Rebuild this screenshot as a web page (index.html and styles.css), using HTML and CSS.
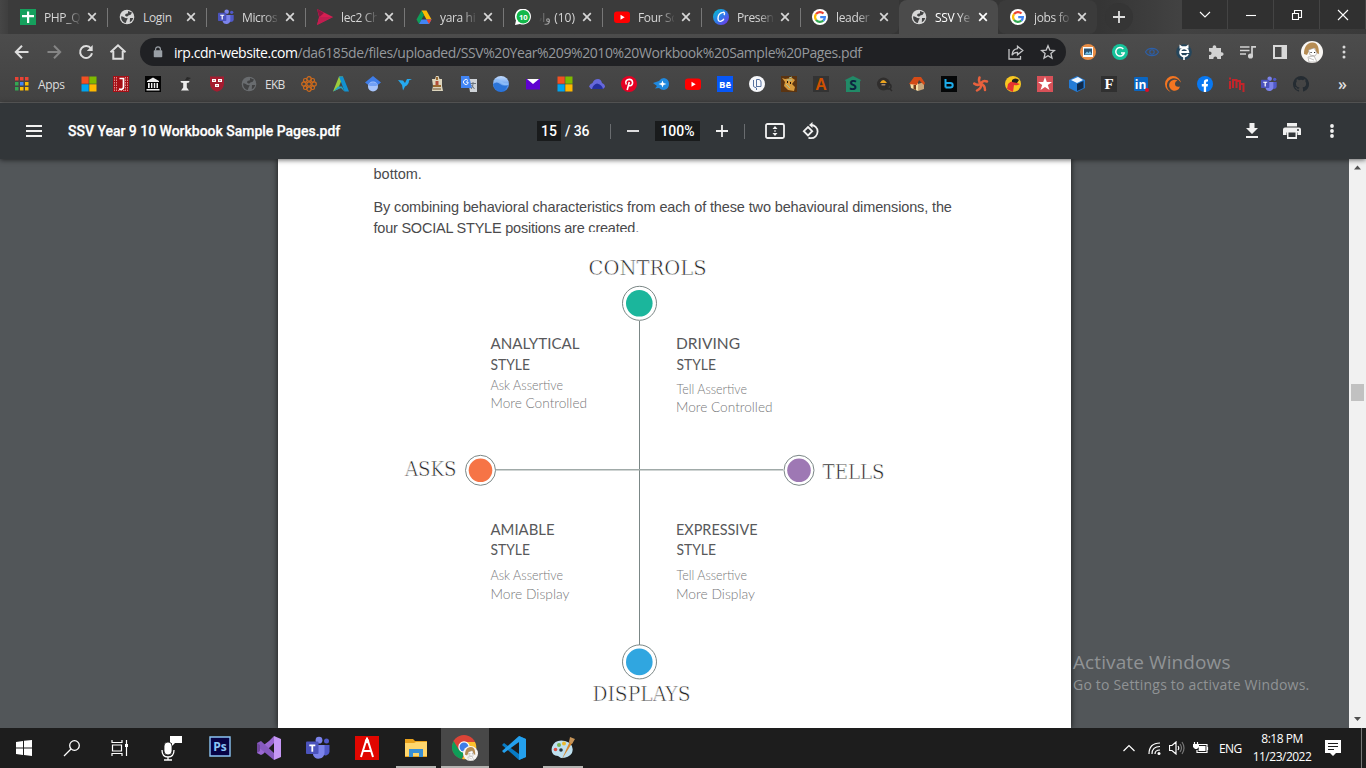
FILE: index.html
```html
<!DOCTYPE html>
<html lang="en">
<head>
<meta charset="utf-8">
<title>SSV Year 9 10 Workbook Sample Pages.pdf</title>
<link rel="stylesheet" href="styles.css">
</head>
<body>
<svg class="defs" width="0" height="0">
  <defs>
    <linearGradient id="canva" x1="0" y1="0" x2="1" y2="1"><stop offset="0" stop-color="#00c4cc"/><stop offset=".5" stop-color="#2f7bea"/><stop offset="1" stop-color="#7d2ae8"/></linearGradient>
    <linearGradient id="earth" x1="0" y1="0" x2="0" y2="1"><stop offset="0" stop-color="#c3dcff"/><stop offset="1" stop-color="#1f6fe0"/></linearGradient>
  </defs>
  <symbol id="globe" viewBox="0 0 16 16"><circle cx="8" cy="8" r="7.3" fill="currentColor"/><path d="M2.2 7.2c2 .3 3.300 1 4 1.800l2.600.3-1.200 2.200-.8 2.500c-3-.5-5-3.500-4.600-6.800zM9 2l4 1.400-1.300 2.400-2.300.6-1.400 1.300L6 6.500l.5-1.400L9 4.300zM11 9h3.200c-.4 1.900-1.600 3.500-3.400 4.300z" fill="#414243"/></symbol>
  <symbol id="google" viewBox="0 0 16 16"><circle cx="8" cy="8" r="8" fill="#fff"/><g fill="none" stroke-width="2.200"><path d="M4 5.200A4.900 4.900 0 0 1 11.500 4.600" stroke="#ea4335"/><path d="M4.100 11A4.900 4.900 0 0 1 4 5.200" stroke="#fbbc05"/><path d="M11.400 11.500A4.900 4.900 0 0 1 4 10.900" stroke="#34a853"/><path d="M8.200 8.100H12.900A4.900 4.900 0 0 1 11.300 11.600" stroke="#4285f4"/></g></symbol>
  <symbol id="youtube" viewBox="0 0 16 16"><rect x="0" y="2.500" width="16" height="11.500" rx="3" fill="#f00"/><path d="M6.500 5.700v5l4.200-2.500z" fill="#fff"/></symbol>
  <symbol id="teams" viewBox="0 0 24 24"><circle cx="13" cy="4.200" r="3.400" fill="#7b83eb"/><circle cx="20.500" cy="5" r="2.500" fill="#5059c9"/><path d="M16 9h7.500v7a4 4 0 0 1-7 2z" fill="#5059c9"/><path d="M8 9h10.500v8a6 6 0 0 1-11.500 2z" fill="#7b83eb"/><rect x="0" y="5.500" width="12.500" height="12.500" rx="1" fill="#4b53bc"/><path d="M3.300 8.500h6v1.800H7.200v5.400H5.400v-5.400H3.300z" fill="#fff"/></symbol>
  <symbol id="ms" viewBox="0 0 16 16"><path d="M.5.5h7.200v7.200H.5z" fill="#f25022"/><path d="M8.300.5h7.200v7.200H8.300z" fill="#7fba00"/><path d="M.5 8.300h7.200v7.200H.5z" fill="#00a4ef"/><path d="M8.300 8.300h7.200v7.200H8.300z" fill="#ffb900"/></symbol>
  <symbol id="close" viewBox="0 0 10 10"><path d="M1.200 1.200l7.600 7.600M8.800 1.200L1.200 8.800" stroke="currentColor" stroke-width="1.700"/></symbol>
  <symbol id="girl" viewBox="0 0 22 22"><circle cx="11" cy="11" r="11" fill="#f8f6f3"/><path d="M3 13C3 6 6 2 11 1.500S18 5 18 13l-2.500-1-1.500-5-6 3-2 4z" fill="#b68c53"/><path d="M7.500 9l5.500-2 3 5-2 3-5-1zM7 16l6-1 3 6H8zM8 17l5 2" fill="#fff" stroke="#9a9692" stroke-width=".6"/><path d="M9.500 11.500h1.200M13 11.500h1.200" stroke="#222"/></symbol>
</svg>

<header class="browser">
  <div class="tabstrip">
    <div class="tab"><svg class="fav" viewBox="0 0 16 16"><path d="M0 0h16v16H0z" fill="#16a05d"/><path d="M7 2.500h2.200V6H14v2.200H9.200V14H7V8.200H2V6h5z" fill="#fff"/></svg><span class="label">PHP_Q</span><svg class="x"><use href="#close"/></svg></div>
    <div class="tab"><svg class="fav light"><use href="#globe"/></svg><span class="label plain">Login</span><svg class="x"><use href="#close"/></svg></div>
    <div class="tab"><svg class="fav"><use href="#teams"/></svg><span class="label">Micros</span><svg class="x"><use href="#close"/></svg></div>
    <div class="tab"><svg class="fav" viewBox="0 0 16 16"><path d="M0 0l16 8L0 16l2-8z" fill="#d61f52"/><path d="M0 0l7 4-4.500 4z" fill="#8f1540"/><path d="M2.500 8L16 8 0 16z" fill="#c21d50"/></svg><span class="label">lec2 Ch</span><svg class="x"><use href="#close"/></svg></div>
    <div class="tab"><svg class="fav" viewBox="0 0 16 16"><path d="M5.500 1.500h5l5 9h-5z" fill="#fbbc04"/><path d="M5.500 1.500L8 6l-5 9-2.500-4.500z" fill="#0f9d58"/><path d="M5.500 10.500h10L13 15H3z" fill="#4285f4"/><path d="M15.500 10.500h-5L13 15z" fill="#ea4335"/></svg><span class="label">yara hi</span><svg class="x"><use href="#close"/></svg></div>
    <div class="tab"><svg class="fav" viewBox="0 0 16 16"><path d="M0 16l1-4.500A8 8 0 1 1 5 15z" fill="#fff"/><circle cx="8.200" cy="7.800" r="6.700" fill="#12b84a"/><text x="8.200" y="10.800" class="wa">10</text></svg><span class="label rtl" dir="rtl">(10) وات</span><svg class="x"><use href="#close"/></svg></div>
    <div class="tab"><svg class="fav"><use href="#youtube"/></svg><span class="label">Four Sc</span><svg class="x"><use href="#close"/></svg></div>
    <div class="tab"><svg class="fav" viewBox="0 0 16 16"><circle cx="8" cy="8" r="8" fill="url(#canva)"/><path d="M11 6c1-1.300.5-3-1.200-2.600C6.500 4 5 7 5 9.500s1.500 3.300 3.200 2.600c1.300-.5 2.300-1.500 2.600-2.400" fill="none" stroke="#fff" stroke-width="1.400"/></svg><span class="label">Presen</span><svg class="x"><use href="#close"/></svg></div>
    <div class="tab last"><svg class="fav"><use href="#google"/></svg><span class="label">leader</span><svg class="x"><use href="#close"/></svg></div>
    <div class="tab active"><svg class="fav light"><use href="#globe"/></svg><span class="label">SSV Ye</span><svg class="x"><use href="#close"/></svg></div>
    <div class="tab after"><svg class="fav"><use href="#google"/></svg><span class="label">jobs fo</span><svg class="x"><use href="#close"/></svg></div>
    <div class="newtab"><svg width="12" height="12" viewBox="0 0 12 12"><path d="M6 0v12M0 6h12" stroke="#dedede" stroke-width="1.800"/></svg></div>
    <div class="winctl">
      <span><svg width="12" height="8"><path d="M1 1l5 5 5-5" /></svg></span>
      <span><svg width="12" height="8"><path d="M1 4.500h10"/></svg></span>
      <span><svg width="12" height="12"><path d="M1.500 4.500h6v6h-6zM3.500 4V1.500h7v7H8"/></svg></span>
      <span><svg width="12" height="12"><path d="M1 1l10 10M11 1L1 11"/></svg></span>
    </div>
  </div>

  <div class="navbar">
    <div class="navbtns">
      <span><svg width="16" height="16" viewBox="0 0 16 16"><path d="M14.500 8H2M8 1.800L1.800 8 8 14.200"/></svg></span>
      <span class="dim"><svg width="16" height="16" viewBox="0 0 16 16"><path d="M1.500 8H14M8 1.800L14.200 8 8 14.200"/></svg></span>
      <span><svg width="16" height="16" viewBox="0 0 16 16"><path d="M13 4.500A6 6 0 1 0 14 9.300"/><path d="M14.700 1v6H8.800z" fill="#dedede" stroke="none"/></svg></span>
      <span><svg width="18" height="18" viewBox="0 0 18 18"><path d="M1.500 9.200L9 2.300l7.500 6.900M4.300 8v7.800h9.400V8"/></svg></span>
    </div>
    <div class="omnibox">
      <svg class="lock" width="10" height="12" viewBox="0 0 10 12"><path d="M1.500 5h7v5.500h-7z" fill="#9aa0a6" stroke="#9aa0a6" stroke-width="1.500" stroke-linejoin="round"/><path d="M2.600 4.500V3.200a2.400 2.400 0 0 1 4.800 0v1.300" fill="none" stroke="#9aa0a6" stroke-width="1.200"/></svg>
      <span class="url"><b>irp.cdn-website.com</b><span class="path">/da6185de/files/uploaded/SSV%20Year%209%2010%20Workbook%20Sample%20Pages.pdf</span></span>
      <svg class="share" width="16" height="15" viewBox="0 0 16 15"><path d="M1 4v10h11.500v-3M9.500 1.200L14.800 5.500 9.500 9.800V7.300C6.500 7.200 5 8.300 4 10.300 4.200 7 6 4 9.500 3.700z"/></svg>
      <svg width="16" height="16" viewBox="0 0 16 16"><path d="M8 1.800l1.800 4.300 4.600.4-3.500 3 1.100 4.600L8 11.700l-4 2.400 1.100-4.600-3.500-3 4.600-.4z"/></svg>
    </div>
    <div class="exts">
      <span><svg viewBox="0 0 16 16"><circle cx="8" cy="8" r="8" fill="#e98d45"/><path d="M3 3h10v10H3z" fill="#fff"/><path d="M4 4.500h8V11H4z" fill="#2d5573"/><path d="M4.500 10.500l2.500-3 1.500 1.500L10 7l2 3.500z" fill="#79c3e9"/></svg></span>
      <span><svg viewBox="0 0 16 16"><circle cx="8" cy="8" r="8" fill="#15c39a"/><path d="M11.300 4.900A4.300 4.300 0 1 0 12.200 9H9" fill="none" stroke="#fff" stroke-width="1.500"/></svg></span>
      <span><svg viewBox="0 0 16 16" fill="none" stroke="#2c5fa8" stroke-width="1.100"><path d="M1.500 8C4 3.200 12 3.200 14.500 8 12 12.800 4 12.800 1.500 8z"/><circle cx="8" cy="8" r="2.200"/></svg></span>
      <span><svg viewBox="0 0 16 16"><circle cx="8" cy="8" r="7.800" fill="#25465c"/><path d="M3.500.5L6 2.300h4L12.500.5v4h-9zM7.200 11h1.600v5H7.200z" fill="#fff"/><path d="M12 10A4.100 4.100 0 1 1 12.300 8H5" fill="none" stroke="#fff" stroke-width="1.900"/></svg></span>
      <span><svg viewBox="0 0 16 16"><path d="M1 4h3.700C4 .2 8.800.2 8.300 4H13v4.200c3.400-.5 3.400 4.200 0 3.800V15H9.200c.5-3.400-4.200-3.400-3.800 0H1v-4c3.400.4 3.400-4 0-3.500z" fill="#d2d2d2"/></svg></span>
      <span><svg viewBox="0 0 16 16" fill="none" stroke="#d2d2d2" stroke-width="1.700"><path d="M0 3h9.500M0 6.500h9.500M0 10h6"/><path d="M12 12V2.800h4"/><circle cx="10.500" cy="12" r="1.700" fill="#d2d2d2"/></svg></span>
      <span><svg viewBox="0 0 16 16"><path d="M1 1h14v14H1zM3 3v10h6.500V3z" fill="#d8d8d8" fill-rule="evenodd"/></svg></span>
      <span><svg class="avatar"><use href="#girl"/></svg></span>
      <span><svg viewBox="0 0 16 16" fill="#d8d8d8"><circle cx="8" cy="3" r="1.500"/><circle cx="8" cy="8" r="1.500"/><circle cx="8" cy="13" r="1.500"/></svg></span>
    </div>
  </div>

  <nav class="bookmarks">
    <svg class="appsicon" width="14" height="14" viewBox="0 0 14 14"><path d="M0 0h3.500v3.500H0zM5 0h3.500v3.500H5zM10 0h3.500v3.500H10z" fill="#ea4335"/><path d="M0 5h3.500v3.500H0z" fill="#34a853"/><path d="M5 5h3.500v3.500H5z" fill="#4285f4"/><path d="M10 5h3.500v3.500H10zM5 10h3.500v3.500H5zM10 10h3.500v3.500H10z" fill="#fbbc04"/><path d="M0 10h3.500v3.500H0z" fill="#34a853"/></svg>
    <span class="bk apps">Apps</span>
    <span class="bm"><svg><use href="#ms"/></svg></span>
    <span class="bm"><svg viewBox="0 0 16 16"><path d="M0 0h16v16H0z" fill="#a50f16"/><path d="M1.500 1v14M3.500 1v14M12.500 1v14M14.500 1v14M5 14.500h7" stroke="#dc8f8b" stroke-dasharray="1.500 1"/><path d="M6.500 2.500h4v8.500q0 3-4.500 2" fill="none" stroke="#fff" stroke-width="1.700"/></svg></span>
    <span class="bm"><svg viewBox="0 0 16 16"><path d="M0 0h16v16H0z" fill="#050505"/><path d="M2 5l6-3.500L14 5v1H2zM3 7h1.700v5H3zM6 7h1.400v5H6zM8.800 7h1.400v5H8.800zM11.500 7H13v5h-1.500zM1.500 13h13v1.500h-13z" fill="#eee"/></svg></span>
    <span class="bm"><svg viewBox="0 0 16 16"><path d="M3.500 5h9l-.5 1.500-2.200.5v4.500l2.200 3H4l2.200-3V7L4 6.500z" fill="#eee"/><path d="M8 4l2-3 4 1-3 2z" fill="#292929"/></svg></span>
    <span class="bm"><svg viewBox="0 0 16 16"><path d="M1 .5h14v7q0 6-7 8.300Q1 13.500 1 7.500z" fill="#a51c30"/><path d="M3 3h4v3H3zM9 3h4v3H9zM6 8h4v3H6z" fill="#fff"/><path d="M4.500 4.500h1M10.500 4.500h1M7.500 9.500h1" stroke="#a51c30"/></svg></span>
    <span class="bm"><svg class="darkglobe"><use href="#globe"/></svg></span>
    <span class="bk ekb">EKB</span>
    <span class="bm"><svg viewBox="0 0 16 16" fill="none" stroke="#d06b1c" stroke-width="1.200"><circle cx="8" cy="8" r="2.200"/><circle cx="8" cy="2.900" r="2.200"/><circle cx="8" cy="13.100" r="2.200"/><circle cx="2.900" cy="8" r="2.200"/><circle cx="13.100" cy="8" r="2.200"/><circle cx="4.300" cy="4.300" r="1.800"/><circle cx="11.700" cy="4.300" r="1.800"/><circle cx="4.300" cy="11.700" r="1.800"/><circle cx="11.700" cy="11.700" r="1.800"/></svg></span>
    <span class="bm"><svg viewBox="0 0 16 16"><path d="M6 .5h4L5 13l-5 2.500z" fill="#9ccc3c"/><path d="M6 .5h4l6 15h-4.500z" fill="#1292d1"/><path d="M0 15.500l5-5h4l2.500 5L8 12z" fill="#25a8c4"/></svg></span>
    <span class="bm"><svg viewBox="0 0 16 16"><path d="M0 6.500L8 0l8 6.500-4 3H4z" fill="#3f7de8"/><circle cx="8" cy="10.500" r="5" fill="#a7c4fb"/><path d="M3.500 8Q8 4.500 12.500 8l-1 2h-7z" fill="#72a0f5"/></svg></span>
    <span class="bm"><svg viewBox="0 0 16 16"><path d="M1 4l5 .5L8 7l2-4h2.500L15 3l-3 1.500q0 4-4 6L6 14.500 5 9z" fill="#25a9ef"/></svg></span>
    <span class="bm"><svg viewBox="0 0 16 16"><path d="M6 3l1-3h2.500l1 3L13 3v7l1 5H3l1-5-1-7z" fill="#ddd5bd"/><path d="M7 1h2v3H7zM4 9h8v2H4z" fill="#9a6a31"/><path d="M6.500 5h3v4h-3z" fill="#b34c3a"/><path d="M4 13h8" stroke="#6d5031"/></svg></span>
    <span class="bm"><svg viewBox="0 0 16 16"><path d="M7 3h9v13H9z" fill="#cfd3d8"/><path d="M0 0h8l3 12H0z" fill="#4285f4"/><path d="M7 4.500A2.500 2.500 0 1 0 7 7.500V6H5" fill="none" stroke="#fff"/><path d="M9.500 7.500H15M12 6v2q0 3-2 5M10.500 9l3 4" stroke="#6b747e" fill="none"/></svg></span>
    <span class="bm"><svg viewBox="0 0 16 16"><circle cx="8" cy="8" r="8" fill="url(#earth)"/><path d="M0 8q4-3 7 0t8 1q-3 6.500-7 6.500Q1 15 0 8z" fill="#2b74d8"/><path d="M1 5q4-2 7 1t7 2" stroke="#8bbcf8" stroke-width="2" fill="none"/></svg></span>
    <span class="bm"><svg viewBox="0 0 16 16"><path d="M1 3h14v10.500H1z" fill="#5f01d1"/><path d="M2 3h12L8 8z" fill="#fff"/></svg></span>
    <span class="bm"><svg><use href="#ms"/></svg></span>
    <span class="bm"><svg viewBox="0 0 16 16"><path d="M0 10.500Q1 7.500 3.500 7 5 3 9 3q3 0 4 4 3 1 3 4l-2 2H2z" fill="#6668dc"/><path d="M3 13Q4 8.500 8 7.500q5 1 6 5.500z" fill="#252f9e"/></svg></span>
    <span class="bm"><svg viewBox="0 0 16 16"><circle cx="8" cy="8" r="8" fill="#e60023"/><path d="M5.300 8.500C3.500 5 6 3.400 8.200 3.400c4.500 0 4.200 6.300.7 6.300-1 0-1.500-.6-1.500-.6M8.300 6l-2.100 8" fill="none" stroke="#fff" stroke-width="1.600"/></svg></span>
    <span class="bm"><svg viewBox="0 0 16 16"><path d="M0 7l6-2q2-3 5-3 5 1 5 6t-5 6q-3 0-5-2l-4 .5L4 10z" fill="#2089df"/><path d="M9.500 4.500l1 2.500 3 1-3 1-1 2.500-1-2.500-3-1 3-1z" fill="#fff"/></svg></span>
    <span class="bm"><svg><use href="#youtube"/></svg></span>
    <span class="bm"><svg viewBox="0 0 16 16"><path d="M0 0h16v16H0z" fill="#0757f7"/><text x="8" y="11.700" class="be">Bē</text></svg></span>
    <span class="bm"><svg viewBox="0 0 16 16"><circle cx="8" cy="8" r="8" fill="#f7f8fb"/><path d="M4.500 4v6.500l3 1.500v2M7.500 11V3.500h2.500q2 .500 2 2.500v4.500H7.500" fill="none" stroke="#56719f"/></svg></span>
    <span class="bm"><svg viewBox="0 0 16 16"><path d="M0 0h16v16H0z" fill="#5b3411"/><path d="M1 2l3 1 7-1 3 2-3 4 3 3-1 4-6-1-4-4 1-4z" fill="#d89b3c"/><path d="M6 4h5M5 8l4 4M8 2l3-1" stroke="#a4c3a0"/><path d="M6 6h1M9 7h1" stroke="#241307" stroke-width="2"/></svg></span>
    <span class="bm"><svg viewBox="0 0 16 16"><path d="M0 0h16v16H0z" fill="#333"/><text x="8" y="14" class="letterA">A</text></svg></span>
    <span class="bm"><svg viewBox="0 0 16 16"><path d="M0 4l8-4 8 4-1 1.500V16H1V5.500z" fill="#218a67"/><text x="8" y="14" class="letterS">S</text></svg></span>
    <span class="bm"><svg viewBox="0 0 16 16"><circle cx="6.500" cy="8" r="6.500" fill="#302e2d"/><path d="M3 7q3-6 7 0z" fill="#efa51d"/><path d="M4.500 8h4v1.500h-4z" fill="#a28572"/><path d="M13 13l2 2" stroke="#2c2b2b" stroke-width="1.500"/><circle cx="11.500" cy="10.500" r="2.500" fill="none" stroke="#2c2b2b" stroke-width="1.500"/></svg></span>
    <span class="bm"><svg viewBox="0 0 16 16"><path d="M1 7h8v8l-7-3z" fill="#f7dfa6"/><path d="M9 8l6-2v7l-6 2z" fill="#c8a579"/><path d="M0 8l5-7 7 0 4 6-1 2-5-5-2 5z" fill="#d54b17"/><path d="M4.500 9h2.500v5l-2.500-1z" fill="#713c1b"/></svg></span>
    <span class="bm"><svg viewBox="0 0 16 16"><path d="M0 0h16v16H0z" fill="#050708"/><path d="M4.500 3v8.500M4.700 7h4.500q2.500 0 2.500 2.200t-2.500 2.200H4.500" fill="none" stroke="#1dadeb" stroke-width="2"/></svg></span>
    <span class="bm"><svg viewBox="0 0 16 16" fill="none" stroke="#e8613d" stroke-width="2.500" stroke-linecap="round"><path d="M8 8Q5 6 6.500 1.500M8 8Q4 10 1.200 7.500M8 8q1 4-4 6.500M8 8q4 1 4 6M8 8q1-4 6-2.500"/></svg></span>
    <span class="bm"><svg viewBox="0 0 16 16"><circle cx="8" cy="8" r="8" fill="#f8c722"/><path d="M3 8q4-5 9-1l3 1q-3 2-6 1l-1 7-6-3z" fill="#e63431"/><path d="M7 4q3-3 7 0l-2 3-5-1z" fill="#25211d"/></svg></span>
    <span class="bm"><svg viewBox="0 0 16 16"><path d="M0 0h16v16H0z" fill="#d85158"/><path d="M8 1l1.800 5H15l-4.200 3 1.700 5L8 11l-4.500 3 1.700-5L1 6h5.200z" fill="#fff"/></svg></span>
    <span class="bm"><svg viewBox="0 0 16 16"><path d="M0 4l8-4 8 4v8l-8 4-8-4z" fill="#237bd6"/><path d="M2 4l7-3 5 3-6 3z" fill="#eef6ff"/><path d="M8 8l6.500-3v7L8 15z" fill="#102b4c"/></svg></span>
    <span class="bm"><svg viewBox="0 0 16 16"><path d="M0 0h16v16H0z" fill="#303030"/><text x="8" y="13.300" class="letterF">F</text></svg></span>
    <span class="bm"><svg viewBox="0 0 16 16"><rect x="1" y="1" width="14" height="14" rx="1" fill="#0a66c2"/><text x="7.500" y="12.500" class="linked">in</text><circle cx="14" cy="14" r="2" fill="#e10c25"/></svg></span>
    <span class="bm"><svg viewBox="0 0 16 16"><path d="M16 7.500A8 8 0 1 0 7 16a7 7 0 1 1 7.500-11Q16 6 16 7.500z" fill="#f47521"/><path d="M12.500 4.500a5.500 5.500 0 1 0 2.500 6q-5 1-5-3 0-2 2.500-3z" fill="#f47521"/></svg></span>
    <span class="bm"><svg viewBox="0 0 16 16"><circle cx="8" cy="8" r="8" fill="#0878f2"/><path d="M6.800 16v-5.500h-2V8h2V6.500C6.800 4 8.300 3 11 3.400v2.200c-1.500 0-1.900.3-1.900 1.300V8H11l-.4 2.500H9.100V16z" fill="#fff"/></svg></span>
    <span class="bm"><svg viewBox="0 0 16 16"><path d="M1 5v8M4 12V4h3.500v8M7.500 5H11v9M11 8h3.500v8M1 1.500v2" fill="none" stroke="#c3252b" stroke-width="2"/></svg></span>
    <span class="bm"><svg><use href="#teams"/></svg></span>
    <span class="bm"><svg viewBox="0 0 16 16"><path fill="#252c32" d="M8 0a8 8 0 0 0-2.530 15.590c.4.070.55-.17.55-.38v-1.490c-2.010.37-2.530-.49-2.690-.94-.09-.23-.48-.94-.82-1.130-.28-.15-.68-.52-.01-.53.63-.01 1.080.58 1.230.82.72 1.210 1.870.87 2.330.66.070-.52.280-.87.510-1.070-1.780-.2-3.640-.89-3.640-3.950 0-.87.310-1.590.82-2.150-.08-.2-.36-1.020.08-2.120 0 0 .67-.21 2.200.82a7.600 7.600 0 0 1 4 0c1.530-1.040 2.200-.82 2.200-.82.440 1.100.16 1.920.08 2.120.51.560.82 1.270.82 2.150 0 3.070-1.870 3.750-3.650 3.950.29.250.54.730.54 1.480v2.200c0 .21.150.46.550.38A8 8 0 0 0 8 0z"/></svg></span>
    <span class="more">»</span>
  </nav>
</header>

<div class="pdfbar">
  <svg class="menu" width="16" height="12"><path d="M0 1h16M0 6h16M0 11h16" stroke="#f1f1f1" stroke-width="2"/></svg>
  <span class="title">SSV Year 9 10 Workbook Sample Pages.pdf</span>
  <div class="pager">
    <span class="box page">15</span><span class="total">/ 36</span><i class="sep"></i>
    <svg class="minus" width="12" height="12"><path d="M0 6h12"/></svg>
    <span class="box zoom">100%</span>
    <svg class="plus" width="12" height="12"><path d="M0 6h12M6 0v12"/></svg><i class="sep two"></i>
    <svg class="fit" width="20" height="16" viewBox="0 0 20 16"><rect x="1" y="1" width="18" height="14" rx="1.500" fill="none" stroke="#f1f1f1" stroke-width="1.800"/><path d="M10 3l2.500 3h-5zM10 13l2.500-3h-5zM9.300 7.300h1.400v1.400H9.300z" fill="#f1f1f1"/></svg>
    <svg class="rot" width="18" height="18" viewBox="0 0 18 18" fill="none" stroke="#f1f1f1" stroke-width="1.800"><path d="M6 5l4.200 4.200L6 13.400 1.800 9.200z"/><path d="M9 3a6.600 6.600 0 1 1 0 13.200q-1.500 0-2.500-.7"/><path d="M10.500 0v6L7 3z" fill="#f1f1f1" stroke="none"/></svg>
  </div>
  <div class="actions">
    <svg width="12" height="16" viewBox="0 0 12 16" fill="#f1f1f1"><path d="M3.500 0h5v5H12l-6 6-6-6h3.500zM0 13h12v2H0z"/></svg>
    <svg width="18" height="16" viewBox="0 0 18 16"><path d="M4 0h10v3.500H4zM2 4.500h14q2 0 2 2V12h-3.500V9.500h-11V12H0V6.500q0-2 2-2zM4 9.500h10V16H4z" fill="#f1f1f1"/><path d="M5.500 9.500h7v4.500h-7z" fill="#323639"/><circle cx="15" cy="7" r="1" fill="#323639"/></svg>
    <svg width="4" height="16" viewBox="0 0 4 16" fill="#f1f1f1"><circle cx="2" cy="3" r="1.900"/><circle cx="2" cy="8" r="1.900"/><circle cx="2" cy="13" r="1.900"/></svg>
  </div>
</div>

<main class="viewer">
  <div class="sheet">
    <p class="para first">bottom.</p>
    <p class="para second"><span class="l1">By combining behavioral characteristics from each of these two behavioural dimensions, the</span><br><span class="l2">four SOCIAL STYLE positions are created.</span></p>
    <svg class="diagram" viewBox="278 232 793 496" width="793" height="496">
      <path d="M588 232h400v12H588z" fill="#fff"/>
      <path d="M639.500 321v324" stroke="#7b8786"/><path d="M496 469.700h287" stroke="#a0aaa8" stroke-width="1.500"/>
      <g fill="#fff" stroke="#7b8786"><circle cx="639.500" cy="303.300" r="17"/><circle cx="639.500" cy="661.900" r="17"/><circle cx="480.500" cy="470.300" r="15"/><circle cx="799" cy="470.300" r="15"/></g>
      <circle cx="639.300" cy="303.300" r="13.300" fill="#1bb69c"/><circle cx="639.300" cy="661.900" r="13.300" fill="#30a6e0"/><circle cx="480.500" cy="470.300" r="11.800" fill="#f67446"/><circle cx="799" cy="470.300" r="11.800" fill="#9e78b4"/>
      <g class="pole"><text x="588.500" y="275" textLength="118" lengthAdjust="spacingAndGlyphs">CONTROLS</text><text x="405" y="476" textLength="51.500" lengthAdjust="spacingAndGlyphs">ASKS</text><text x="822.500" y="479" textLength="62" lengthAdjust="spacingAndGlyphs">TELLS</text><text x="592.500" y="701" textLength="98" lengthAdjust="spacingAndGlyphs">DISPLAYS</text></g>
      <g class="style"><text x="490.500" y="349" textLength="89" lengthAdjust="spacingAndGlyphs">ANALYTICAL</text><text x="490.500" y="370" textLength="39.500" lengthAdjust="spacingAndGlyphs">STYLE</text><text x="676" y="349" textLength="64" lengthAdjust="spacingAndGlyphs">DRIVING</text><text x="676.500" y="370" textLength="39.500" lengthAdjust="spacingAndGlyphs">STYLE</text><text x="490.500" y="535" textLength="64" lengthAdjust="spacingAndGlyphs">AMIABLE</text><text x="490.500" y="555" textLength="39.500" lengthAdjust="spacingAndGlyphs">STYLE</text><text x="676" y="535" textLength="81.500" lengthAdjust="spacingAndGlyphs">EXPRESSIVE</text><text x="676.500" y="555" textLength="39.500" lengthAdjust="spacingAndGlyphs">STYLE</text></g>
      <g class="trait"><text x="490.500" y="390" textLength="72.500" lengthAdjust="spacingAndGlyphs">Ask Assertive</text><text x="490.500" y="408" textLength="96.500" lengthAdjust="spacingAndGlyphs">More Controlled</text><text x="676.500" y="394" textLength="70.500" lengthAdjust="spacingAndGlyphs">Tell Assertive</text><text x="676" y="412" textLength="96.500" lengthAdjust="spacingAndGlyphs">More Controlled</text><text x="490.500" y="580" textLength="72.500" lengthAdjust="spacingAndGlyphs">Ask Assertive</text><text x="490.500" y="599" textLength="79" lengthAdjust="spacingAndGlyphs">More Display</text><text x="676.500" y="580" textLength="70.500" lengthAdjust="spacingAndGlyphs">Tell Assertive</text><text x="676" y="599" textLength="79" lengthAdjust="spacingAndGlyphs">More Display</text></g>
    </svg>
  </div>
  <div class="scroll"><svg width="9" height="5"><path d="M1 4.500L4.500.5 8 4.500z"/></svg><i class="thumb"></i><svg width="9" height="5"><path d="M1 0h7L4.500 4z"/></svg></div>
  <div class="watermark"><div class="w1">Activate Windows</div><div class="w2">Go to Settings to activate Windows.</div></div>
</main>

<footer class="taskbar">
  <span class="t"><svg width="16" height="16" viewBox="0 0 16 16"><path d="M0 2l7-1v6.500H0zM8 .8L16 0v7.500H8zM0 8.500h7V15l-7-1zM8 8.500h8V16l-8-1z" fill="#fff"/></svg></span>
  <span class="t"><svg width="18" height="18" viewBox="0 0 18 18" fill="none" stroke="#fff" stroke-width="1.300"><circle cx="11.500" cy="6.500" r="4.800"/><path d="M8 10l-7 7"/></svg></span>
  <span class="t"><svg width="18" height="16" viewBox="0 0 18 16" fill="none" stroke="#fff" stroke-width="1.200"><path d="M1 0v2.500h10V0M1 16v-2.500h10V16M1.500 5h9v6h-9zM15.500 0v16"/><path d="M14 4h3v3h-3z" fill="#fff" stroke="none"/></svg></span>
  <span class="t wide"><svg width="22" height="26" viewBox="0 0 22 26"><path d="M9 1h12v7h-7l-3 3V8H9z" fill="#fff"/><rect x="3" y="7" width="8" height="13" rx="4" fill="#fff" stroke="#1d1d1d" stroke-width=".8"/><path d="M1 15q0 7 6 7t6-7M7 22v3M3 25h8" fill="none" stroke="#fff" stroke-width="1.300"/></svg></span>
  <span class="t wide"><svg class="up" width="22" height="21" viewBox="0 0 22 21"><path d="M1 1h20v19H1z" fill="#070346" stroke="#8cc5f5" stroke-width="1.400"/><text x="11" y="14.500" class="ps">Ps</text></svg></span>
  <span class="t wide"><svg width="24" height="24" viewBox="0 0 24 24"><path d="M17 0l7 3v18l-7 3z" fill="#c597f5"/><path d="M17 0v7L6 18l-2 1-4-2V14L12 5z" fill="#9a68d2"/><path d="M0 7l4-2 13 12v7L0 10z" fill="#865ac0"/><path d="M0 7l3 2v6l-3 2z" fill="#70469d"/></svg></span>
  <span class="t wide"><svg width="24" height="24"><use href="#teams"/></svg></span>
  <span class="t wide"><svg width="24" height="24" viewBox="0 0 24 24"><path d="M0 0h24v24H0z" fill="#e10600"/><path d="M12 1.500v4M11 5L6 21M13 5l5 16M7.500 15h9" fill="none" stroke="#fff" stroke-width="2"/><circle cx="12" cy="5" r="2.200" fill="#fff"/></svg></span>
  <span class="t wide run"><svg width="22" height="20" viewBox="0 0 22 20"><path d="M0 1h8l2 2h12v16H0z" fill="#e9a11b"/><path d="M0 5h9l2-1h11v14H0z" fill="#ffd66c"/><path d="M4 11h14v8h-4v-4H8v4H4z" fill="#398fd5"/></svg></span>
  <span class="t wide current"><svg width="26" height="26" viewBox="0 0 26 26"><circle cx="12" cy="12" r="12" fill="#db4437"/><path d="M1.600 6L7 15l5 3-2 6A12 12 0 0 1 1.600 6z" fill="#0f9d58"/><path d="M12 7h11a12 12 0 0 1-13 17l6-9z" fill="#fbc02d"/><circle cx="12" cy="12" r="5.700" fill="#fff"/><circle cx="12" cy="12" r="4.500" fill="#3f7de8"/><svg x="11" y="11" width="15" height="15"><use href="#girl"/></svg></svg></span>
  <span class="t wide"><svg width="24" height="24" viewBox="0 0 24 24"><path d="M17 0l7 3v18l-7 3L0 9l2-2 15 11z" fill="#087bc4"/><path d="M17 0l7 3v18l-7 3zM17 6L2 17l-2-2L17 0z" fill="#24a0ed"/></svg></span>
  <span class="t wide run"><svg width="24" height="24" viewBox="0 0 24 24"><path d="M14 5Q4 3 1 11q-2 8 6 9l3 2q8 0 11-5 3-9-7-12z" fill="#bfe0ef"/><circle cx="8" cy="9" r="2" fill="#78b657"/><circle cx="13" cy="7.500" r="2" fill="#edb92e"/><circle cx="4.500" cy="13.500" r="1.800" fill="#dd4e43"/><circle cx="10" cy="14" r="1.800" fill="#26333a"/><path d="M11 23L19 5l2.500 1.500z" fill="#d6872d"/><path d="M18 6l1-5 5 2-3 5z" fill="#c59358"/></svg></span>
  <div class="tray">
    <svg class="chev" width="12" height="8"><path d="M0.500 7L6 1.500 11.500 7"/></svg>
    <svg class="wifi" width="13" height="13" viewBox="0 0 13 13"><path d="M1 12Q1 1 12 1M4 12q0-7.500 8-7.500M7 12q0-4 5-4"/><circle cx="11" cy="11.500" r="1.500" fill="#fff" stroke="none"/></svg>
    <svg class="snd" width="16" height="14" viewBox="0 0 16 14"><path d="M.5 4.500H3l4-3.500v12L3 9.500H.5zM9 5q1.500 2 0 4"/><path d="M11 3q3 4 0 8M13 1q4 6 0 12" stroke="#777"/></svg>
    <svg class="bat" width="16" height="12" viewBox="0 0 16 12"><path d="M5 2.500h9v8H4V8M14.500 5v3M1.500 0v3M4.500 0v3"/><path d="M0 2h6v3l-2 2H2L0 5zM6 4h6.500v5H5.500z" fill="#fff" stroke="none"/></svg>
    <span class="lang">ENG</span>
    <div class="clock"><div>8:18 PM</div><div>11/23/2022</div></div>
    <svg class="note" width="16" height="16" viewBox="0 0 16 16"><path d="M0 0h16v13h-5l-3 3-3-3H0z" fill="#fff"/><path d="M3 3.500h10M3 6.500h10M3 9.500h6" stroke="#1d1d1d" stroke-width="1"/></svg>
    <i class="desk"></i>
  </div>
</footer>
</body>
</html>
```
FILE: styles.css
```css
* { box-sizing: border-box; }
body { margin: 0; width: 1366px; height: 768px; overflow: hidden; display: flex; flex-direction: column; font-family: "Open Sans", "Noto Sans", sans-serif; font-size: 12px; background: #525659; }
.defs { position: absolute; }
svg { display: block; flex: none; }
span { white-space: nowrap; }

.browser { height: 103px; flex: none; background: linear-gradient(#4c4c4c 34px, #424242 102px); border-bottom: 1px solid #626262; }
.tabstrip { height: 34px; display: flex; padding-left: 8px; background: linear-gradient(90deg, #464646, #343434 20px, #353535 1100px, #424242 1180px, #3a3a3a); }
.tab { width: 99px; height: 34px; padding-left: 12px; display: flex; align-items: center; background: #3b3b3b; position: relative; }
.tab::after { content: ""; position: absolute; right: -1px; top: 8px; width: 1px; height: 19px; background: #777; z-index: 1; }
.tab.last::after, .tab.active::after, .tab.after::after { display: none; }
.tab.last { border-radius: 0 0 8px 0; }
.tab.after { border-radius: 8px; }
.tab.active { background: #4b4b4b; border-radius: 8px 8px 0 0; color: #fff; }
.fav { width: 16px; height: 16px; }
.light { color: #d7d7d7; }
.label { width: 36px; margin-left: 8px; overflow: hidden; color: #d6d6d6; font-size: 12px; letter-spacing: -.35px; -webkit-mask-image: linear-gradient(90deg, #000 60%, rgba(0,0,0,.1)); mask-image: linear-gradient(90deg, #000 60%, rgba(0,0,0,.1)); }
.label.plain { -webkit-mask-image: none; mask-image: none; }
.label.rtl { -webkit-mask-image: linear-gradient(270deg, #000 60%, transparent); mask-image: linear-gradient(270deg, #000 60%, transparent); }
.active .label { color: #fff; }
.x { width: 10px; height: 10px; margin-left: 7px; color: #d6d6d6; }
.active .x { color: #fff; }
.wa { font: bold 7.500px "Open Sans", sans-serif; fill: #fff; text-anchor: middle; }
.newtab { width: 28px; height: 28px; margin: 3px 0 0 8px; border-radius: 50%; background: #353535; display: flex; align-items: center; justify-content: center; }
.winctl { margin-left: auto; height: 29px; display: flex; gap: 1px; background: #444; padding-right: 1px; }
.winctl span { width: 45px; background: #303030; display: flex; align-items: center; justify-content: center; }
.winctl svg { fill: none; stroke: #fff; stroke-width: 1.100; }

.navbar { height: 36px; display: flex; align-items: center; padding-left: 6px; }
.navbtns { display: flex; width: 134px; }
.navbtns span { width: 32px; display: flex; justify-content: center; align-items: center; }
.navbtns svg { fill: none; stroke: #dedede; stroke-width: 2; }
.navbtns .dim svg { stroke: #858585; }
.omnibox { width: 926px; height: 28px; border-radius: 14px; background: #202124; display: flex; align-items: center; padding: 0 10px 0 13px; }
.omnibox svg:not(.lock) { fill: none; stroke: #c5c6c8; stroke-width: 1.300; }
.url { margin-left: 11px; font-size: 14px; letter-spacing: -.41px; color: #95989c; }
.url b { font-weight: 400; color: #fff; letter-spacing: -.45px; }
.share { margin: 0 16px 0 auto; }
.exts { display: flex; padding-left: 6px; }
.exts span { width: 32px; height: 22px; display: flex; align-items: center; justify-content: center; }
.exts svg { width: 16px; height: 16px; }
.exts .avatar { width: 22px; height: 22px; }

.bookmarks { height: 28px; display: flex; align-items: center; padding-left: 15px; color: #dedede; }
.bk { font-size: 12px; letter-spacing: -.3px; }
.apps { width: 35px; margin-left: 9px; }
.ekb { width: 28px; letter-spacing: -.7px; }
.bm { width: 32px; display: flex; justify-content: center; }
.bm svg { width: 16px; height: 16px; }
.darkglobe { color: #696c6f; }
.more { margin-left: 21px; font-size: 16px; font-weight: 600; }
.be { font: bold 9.500px "Open Sans", sans-serif; fill: #fff; text-anchor: middle; }
.letterA { font: bold 16px "Liberation Sans", sans-serif; fill: #cf5100; text-anchor: middle; }
.letterS { font: bold 14px "Open Sans", sans-serif; fill: #0c2440; text-anchor: middle; }
.letterF { font: bold 15px "Liberation Serif", serif; fill: #fff; text-anchor: middle; }
.linked { font: bold 12px "Open Sans", sans-serif; fill: #fff; text-anchor: middle; }

.pdfbar { height: 56px; flex: none; background: #323639; color: #fff; display: flex; align-items: center; padding-left: 26px; font-family: Roboto, sans-serif; box-shadow: 0 1px 5px rgba(0,0,0,.6); z-index: 2; position: relative; }
.title { width: 469px; margin-left: 26px; font-size: 14px; font-weight: 500; letter-spacing: -.02px; -webkit-text-stroke: .25px #fff; }
.pager { display: flex; align-items: center; font-size: 14px; font-weight: 500; }
.box { height: 20px; line-height: 20px; background: #191b1c; text-align: center; }
.page { width: 24px; }
.total { width: 25px; margin-left: 4px; letter-spacing: -.1px; }
.sep { width: 1px; height: 15px; background: #696c6f; margin-left: 20px; }
.minus, .plus { stroke: #f1f1f1; stroke-width: 1.800; }
.minus { margin-left: 16px; }
.zoom { width: 45px; margin-left: 16px; }
.plus { margin-left: 16px; }
.sep.two { margin-left: 16px; }
.fit { margin-left: 20px; }
.rot { margin-left: 17px; }
.actions { margin-left: auto; display: flex; align-items: center; gap: 28px; padding-right: 32px; }
.actions svg:nth-child(2) { margin-left: -3px; margin-right: 1px; }

.viewer { height: 569px; flex: none; display: flex; padding-left: 278px; background: #525659; position: relative; }
.sheet { width: 793px; height: 569px; background: #fff; box-shadow: 0 0 6px rgba(0,0,0,.75); display: flex; flex-direction: column; clip-path: inset(0 -8px); }
.para { margin: 0 0 0 95.500px; flex: none; font-family: "Liberation Sans", Arial, sans-serif; font-size: 14.500px; line-height: 21px; color: #4a4a4c; height: 21px; }
.para.first { margin-top: 5px; }
.para.second { margin-top: 12px; height: 35px; }
.l1 { letter-spacing: -.13px; }
.l2 { letter-spacing: -.22px; }
.diagram { position: relative; }
.pole { font: 19.500px "DejaVu Serif", serif; fill: #1d1d1d; stroke: #fff; stroke-width: .55px; }
.style { font: 16px Lato, sans-serif; fill: #58595b; }
.trait { font: 300 14px Lato, sans-serif; fill: #77787a; }
.scroll { margin-left: auto; width: 17px; background: #f1f1f1; padding: 6px 0; display: flex; flex-direction: column; align-items: center; }
.scroll svg { fill: #505050; }
.thumb { width: 13px; height: 17px; margin: 214px 0 auto; background: #c1c1c1; }
.watermark { position: absolute; left: 1073px; top: 490px; color: #909395; }
.w1 { font-size: 19px; line-height: 26px; letter-spacing: .1px; }
.w2 { font-size: 14px; line-height: 20px; letter-spacing: .2px; }

.taskbar { height: 40px; flex: none; background: #1d1d1d; display: flex; color: #fff; position: relative; z-index: 3; }
.t { width: 48px; height: 40px; display: flex; align-items: center; justify-content: center; }
.t.wide { width: 49px; }
.t:nth-child(4) { margin-left: 3px; }
.t:nth-child(5) { margin-left: -1px; }
.up { margin-bottom: 3px; }
.run { background: linear-gradient(#b4b4b1, #b4b4b1) center bottom / 40px 2px no-repeat; }
.current { background: linear-gradient(#b4b4b1, #b4b4b1) center bottom / 48px 2px no-repeat, linear-gradient(#484848, #484848) center / 48px 40px no-repeat; }
.ps { font: bold 12px "Open Sans", sans-serif; fill: #8cc5f5; text-anchor: middle; }
.tray { margin-left: auto; display: flex; align-items: center; }
.tray svg:not(.note) { fill: none; stroke: #fff; stroke-width: 1.200; }
.wifi { margin-left: 13px; }
.snd { margin-left: 8px; }
.bat { margin-left: 8px; }
.lang { margin-left: 10px; width: 24px; letter-spacing: -.6px; }
.clock { width: 68px; margin-left: 5px; text-align: center; line-height: 18px; letter-spacing: -.5px; }
.note { margin-left: 9px; }
.desk { width: 1px; height: 40px; margin: 0 4px 0 20px; background: #777; }
```
